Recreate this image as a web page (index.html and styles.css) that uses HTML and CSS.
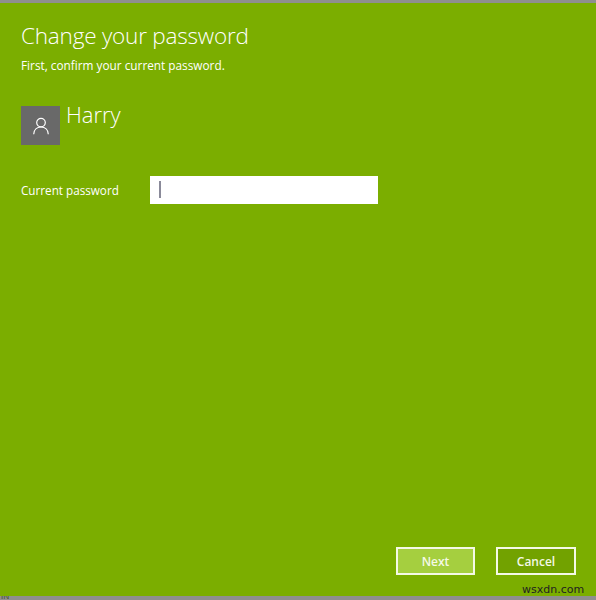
FILE: index.html
```html
<!DOCTYPE html>
<html lang="en">
<head>
<meta charset="utf-8">
<title>Change your password</title>
<link rel="stylesheet" href="styles.css">
</head>
<body>
<div class="screen">
  <div class="strip strip-top"><span class="strip-text">AAVAVAS</span></div>
  <main class="panel">
    <h1 class="title">Change your password</h1>
    <p class="subtitle">First, confirm your current password.</p>
    <div class="user">
      <div class="avatar">
        <svg class="avatar-icon" viewBox="0 0 16 18" width="16" height="18" aria-hidden="true">
          <circle cx="8" cy="5.6" r="4.3"/>
          <path d="M0.7 17.2C0.9 12.8 4 10 8 10s7.1 2.8 7.3 7.2"/>
        </svg>
      </div>
      <div class="user-name">Harry</div>
    </div>
    <div class="field">
      <label class="field-label" for="pw">Current password</label>
      <div class="input" id="pw"><span class="caret"></span></div>
    </div>
    <div class="actions">
      <button class="btn btn-next" type="button">Next</button>
      <button class="btn btn-cancel" type="button">Cancel</button>
    </div>
  </main>
  <div class="strip strip-bottom"><span class="strip-small">IN</span></div>
  <div class="watermark">wsxdn.com</div>
</div>
</body>
</html>
```
FILE: styles.css
```css
* { box-sizing: border-box; }
html, body { margin: 0; padding: 0; }
body { width: 596px; height: 600px; overflow: hidden; background: #7bae00; font-family: "Open Sans", "Liberation Sans", sans-serif; }
.screen { position: relative; width: 596px; height: 600px; display: flex; flex-direction: column; }
.strip { background: #8f8f8f; overflow: hidden; flex: none; }
.strip-top { height: 3px; padding-left: 7px; }
.strip-text { display: block; margin-top: -16px; font-size: 18px; line-height: 18px; color: #222; letter-spacing: 0; }
.strip-bottom { height: 4px; padding-left: 1px; }
.strip-small { display: block; font-size: 8px; line-height: 8px; color: #3c4a20; margin-top: -4px; }
.panel { flex: 1; display: flex; flex-direction: column; background: #7bae00; padding: 0 20px 0 21px; color: #fff; }
.title { margin: 17px 0 0; font-size: 22.5px; line-height: 32px; font-weight: 300; letter-spacing: -0.2px; color: #fff; }
.subtitle { margin: 5px 0 0; font-size: 11.8px; line-height: 16px; font-weight: 400; color: #fff; }
.user { display: flex; align-items: flex-start; margin-top: 33px; }
.avatar { width: 39px; height: 39px; background: #696969; display: flex; align-items: center; justify-content: center; }
.avatar-icon { fill: none; stroke: #fff; stroke-width: 1.2; }
.user-name { margin: -8px 0 0 6px; font-size: 22px; line-height: 32px; font-weight: 300; }
.field { display: flex; align-items: center; margin-top: 31px; }
.field-label { width: 129px; font-size: 11.7px; line-height: 18px; }
.input { width: 228px; height: 28px; background: #fff; padding: 5px 0 0 9px; }
.caret { display: block; width: 1.5px; height: 17px; background: #8a8a99; }
.actions { margin-top: auto; margin-bottom: 21px; display: flex; justify-content: flex-end; gap: 21px; }
.btn { width: 80px; height: 28px; border: 2px solid #f4f9e6; color: #f4f9e6; font-family: inherit; font-size: 12px; font-weight: 600; padding: 0; }
.btn-next { width: 79px; background: #a5cf3f; }
.btn-cancel { background: #72a200; }
.watermark { position: absolute; left: 522px; top: 583px; font-family: "DejaVu Sans", sans-serif; font-size: 11px; line-height: 14px; color: #222; }
```
